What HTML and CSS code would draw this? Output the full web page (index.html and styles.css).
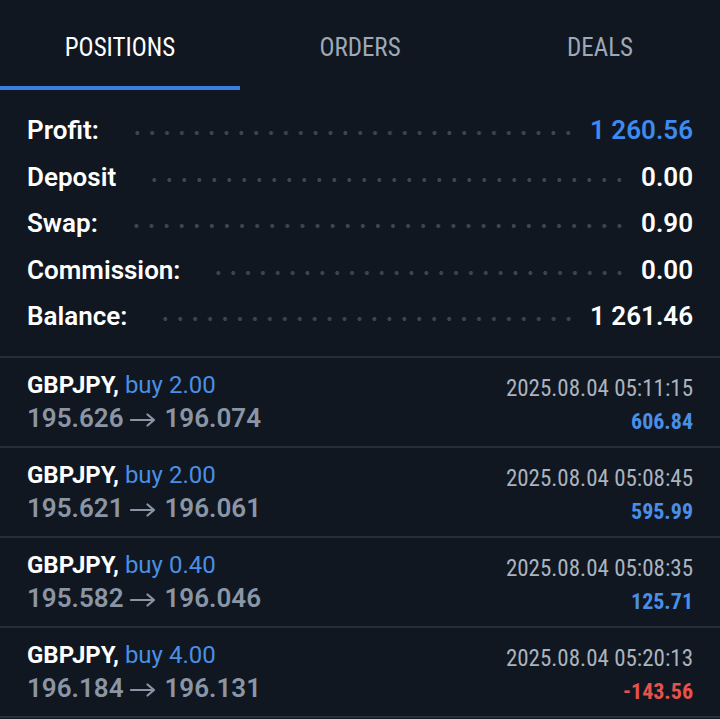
FILE: index.html
```html
<!DOCTYPE html>
<html>
<head>
<meta charset="utf-8">
<link rel="stylesheet" href="styles.css">
</head>
<body>
<div class="app">
  <nav class="tabs">
    <div class="tab active">POSITIONS</div>
    <div class="tab">ORDERS</div>
    <div class="tab">DEALS</div>
  </nav>
  <section class="summary">
    <div class="srow"><span class="label">Profit:</span><span class="dots"></span><span class="value blue">1 260.56</span></div>
    <div class="srow"><span class="label">Deposit</span><span class="dots"></span><span class="value">0.00</span></div>
    <div class="srow"><span class="label">Swap:</span><span class="dots"></span><span class="value">0.90</span></div>
    <div class="srow"><span class="label">Commission:</span><span class="dots"></span><span class="value">0.00</span></div>
    <div class="srow"><span class="label">Balance:</span><span class="dots"></span><span class="value">1 261.46</span></div>
  </section>
  <section class="positions">
    <div class="pos">
      <div class="left">
        <div class="l1"><span class="sym">GBPJPY,</span> <span class="side">buy 2.00</span></div>
        <div class="l2"><span>195.626</span><svg class="arrow" viewBox="0 0 26 14" aria-label="→"><path d="M1 7H24M17.5 1.5L24 7L17.5 12.5"/></svg><span>196.074</span></div>
      </div>
      <div class="right">
        <div class="time">2025.08.04 05:11:15</div>
        <div class="pl">606.84</div>
      </div>
    </div>
    <div class="pos">
      <div class="left">
        <div class="l1"><span class="sym">GBPJPY,</span> <span class="side">buy 2.00</span></div>
        <div class="l2"><span>195.621</span><svg class="arrow" viewBox="0 0 26 14" aria-label="→"><path d="M1 7H24M17.5 1.5L24 7L17.5 12.5"/></svg><span>196.061</span></div>
      </div>
      <div class="right">
        <div class="time">2025.08.04 05:08:45</div>
        <div class="pl">595.99</div>
      </div>
    </div>
    <div class="pos">
      <div class="left">
        <div class="l1"><span class="sym">GBPJPY,</span> <span class="side">buy 0.40</span></div>
        <div class="l2"><span>195.582</span><svg class="arrow" viewBox="0 0 26 14" aria-label="→"><path d="M1 7H24M17.5 1.5L24 7L17.5 12.5"/></svg><span>196.046</span></div>
      </div>
      <div class="right">
        <div class="time">2025.08.04 05:08:35</div>
        <div class="pl">125.71</div>
      </div>
    </div>
    <div class="pos">
      <div class="left">
        <div class="l1"><span class="sym">GBPJPY,</span> <span class="side">buy 4.00</span></div>
        <div class="l2"><span>196.184</span><svg class="arrow" viewBox="0 0 26 14" aria-label="→"><path d="M1 7H24M17.5 1.5L24 7L17.5 12.5"/></svg><span>196.131</span></div>
      </div>
      <div class="right">
        <div class="time">2025.08.04 05:20:13</div>
        <div class="pl neg">-143.56</div>
      </div>
    </div>
  </section>
</div>
</body>
</html>
```
FILE: styles.css
```css
html, body {
  margin: 0;
  padding: 0;
  background: #111720;
}
body {
  font-family: "Roboto", "Liberation Sans", sans-serif;
  color: #ffffff;
}
.app {
  width: 720px;
  height: 719px;
  overflow: hidden;
  background: #111720;
}
.tabs {
  display: grid;
  grid-template-columns: repeat(3, 1fr);
  height: 90px;
}
.tab {
  font-family: "Roboto Condensed", "Liberation Sans Narrow", "DejaVu Sans Condensed", "Roboto", sans-serif;
  font-stretch: condensed;
  font-size: 25px;
  color: #9ea9b8;
  text-align: center;
  padding-top: 33px;
  line-height: 30px;
  box-sizing: border-box;
  border-bottom: 4px solid transparent;
}
.tab.active {
  color: #ffffff;
  border-bottom-color: #3a7fe0;
}
.summary {
  padding: 17px 27px 16.5px 27px;
  border-bottom: 2px solid #262e39;
}
.srow {
  display: flex;
  align-items: center;
  height: 46.5px;
  font-size: 26px;
  font-weight: 600;
}
.label {
  color: #ffffff;
}
.dots {
  flex: 1;
  height: 6px;
  margin: 6px 14px 0 31px;
  background-image: radial-gradient(circle, #3c4551 1.7px, transparent 2.3px);
  background-size: 14.7px 6px;
  background-repeat: space no-repeat;
}
.value {
  color: #ffffff;
}
.blue {
  color: #3d8bf0;
}
.pos {
  display: flex;
  justify-content: space-between;
  height: 90px;
  box-sizing: border-box;
  padding: 12px 27px 0 27px;
  border-bottom: 2px solid #262e39;
}
.l1 {
  font-family: "Roboto", sans-serif;
  font-size: 24px;
  line-height: 30px;
}
.sym {
  color: #ffffff;
  font-weight: 700;
}
.side {
  color: #4a8fe6;
}
.l2 {
  display: flex;
  align-items: center;
  font-family: "Roboto", sans-serif;
  font-size: 26px;
  line-height: 36px;
  height: 36px;
  font-weight: 600;
  color: #8a96a6;
}
.arrow {
  width: 26px;
  height: 14px;
  margin: 3px 9px 0 6px;
  fill: none;
  stroke: #8a96a6;
  stroke-width: 2.2;
  stroke-linecap: round;
  stroke-linejoin: round;
}
.right {
  text-align: right;
  padding-top: 4px;
  font-family: "Roboto Condensed", "Liberation Sans Narrow", "DejaVu Sans Condensed", "Roboto", sans-serif;
  font-stretch: condensed;
}
.time {
  font-size: 23px;
  line-height: 30px;
  color: #aab3bf;
}
.pl {
  font-size: 22px;
  line-height: 35px;
  font-weight: 700;
  color: #4a8fe6;
}
.pl.neg {
  color: #e8524c;
}
```
